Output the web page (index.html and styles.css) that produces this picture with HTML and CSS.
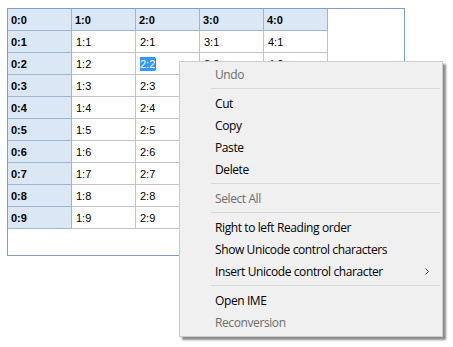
FILE: index.html
```html
<!DOCTYPE html>
<html lang="en">
<head>
    <meta charset="UTF-8">
    <title>Grid context menu</title>
    <link rel="stylesheet" href="styles.css">
</head>
<body>
<div class="grid-frame">
    <div class="grid">
        <div class="cell head">0:0</div>
        <div class="cell head">1:0</div>
        <div class="cell head">2:0</div>
        <div class="cell head">3:0</div>
        <div class="cell head">4:0</div>

        <div class="cell rowhead">0:1</div>
        <div class="cell">1:1</div>
        <div class="cell">2:1</div>
        <div class="cell">3:1</div>
        <div class="cell">4:1</div>

        <div class="cell rowhead">0:2</div>
        <div class="cell">1:2</div>
        <div class="cell editing"><span class="sel">2:2</span><span class="caret"></span></div>
        <div class="cell">3:2</div>
        <div class="cell">4:2</div>

        <div class="cell rowhead">0:3</div>
        <div class="cell">1:3</div>
        <div class="cell">2:3</div>
        <div class="cell">3:3</div>
        <div class="cell">4:3</div>

        <div class="cell rowhead">0:4</div>
        <div class="cell">1:4</div>
        <div class="cell">2:4</div>
        <div class="cell">3:4</div>
        <div class="cell">4:4</div>

        <div class="cell rowhead">0:5</div>
        <div class="cell">1:5</div>
        <div class="cell">2:5</div>
        <div class="cell">3:5</div>
        <div class="cell">4:5</div>

        <div class="cell rowhead">0:6</div>
        <div class="cell">1:6</div>
        <div class="cell">2:6</div>
        <div class="cell">3:6</div>
        <div class="cell">4:6</div>

        <div class="cell rowhead">0:7</div>
        <div class="cell">1:7</div>
        <div class="cell">2:7</div>
        <div class="cell">3:7</div>
        <div class="cell">4:7</div>

        <div class="cell rowhead">0:8</div>
        <div class="cell">1:8</div>
        <div class="cell">2:8</div>
        <div class="cell">3:8</div>
        <div class="cell">4:8</div>

        <div class="cell rowhead">0:9</div>
        <div class="cell">1:9</div>
        <div class="cell">2:9</div>
        <div class="cell">3:9</div>
        <div class="cell">4:9</div>
    </div>
</div>

<div class="menu">
    <div class="item disabled">Undo</div>
    <div class="sep"></div>
    <div class="item">Cut</div>
    <div class="item">Copy</div>
    <div class="item">Paste</div>
    <div class="item">Delete</div>
    <div class="sep"></div>
    <div class="item disabled">Select All</div>
    <div class="sep"></div>
    <div class="item">Right to left Reading order</div>
    <div class="item">Show Unicode control characters</div>
    <div class="item submenu">
        Insert Unicode control character
        <svg class="arrow" width="4" height="7" viewBox="0 0 4 7">
            <path d="M0.5 0.5 L3.5 3.5 L0.5 6.5" fill="none" stroke="#333" stroke-width="1"/>
        </svg>
    </div>
    <div class="sep"></div>
    <div class="item">Open IME</div>
    <div class="item disabled">Reconversion</div>
</div>
</body>
</html>
```

FILE: styles.css
```css
* {
    margin: 0;
    padding: 0;
    box-sizing: border-box;
}

body {
    background: #fff;
    padding: 8px 0 0 7px;
    font-family: "Liberation Sans", Arial, sans-serif;
    color: #000;
}

.grid-frame {
    width: 398px;
    height: 248px;
    border: 1px solid #7d9fc3;
    background: #fff;
}

.grid {
    display: grid;
    grid-template-columns: repeat(5, 64px);
    grid-auto-rows: 22px;
}

.cell {
    display: flex;
    align-items: center;
    padding-left: 4px;
    font-size: 11px;
    border-right: 1px solid #c3c3c3;
    border-bottom: 1px solid #c3c3c3;
}

.head,
.rowhead {
    background: #dbe7f4;
    font-weight: bold;
    padding-left: 3px;
    border-color: #9fb6cf;
}

.editing .sel {
    background: #3399ff;
    color: #fff;
    padding: 1px 0;
}

.caret {
    display: inline-block;
    width: 1px;
    height: 12px;
    background: #c0641a;
}

.menu {
    position: absolute;
    left: 179px;
    top: 61px;
    width: 264px;
    height: 276px;
    background: #f0f0f0;
    border: 1px solid #cccccc;
    box-shadow: 3px 3px 2px rgba(0, 0, 0, 0.45);
    padding: 1px 2px 3px 1px;
    font-family: "Open Sans", "Noto Sans", sans-serif;
    font-size: 12px;
    letter-spacing: -0.4px;
}

.item {
    height: 22px;
    display: flex;
    align-items: center;
    padding-left: 34px;
    color: #000;
}

.item.disabled {
    color: #6d6d6d;
}

.submenu {
    justify-content: space-between;
    padding-right: 11px;
}

.sep {
    height: 7px;
    margin-left: 30px;
    display: flex;
    align-items: center;
}

.sep::after {
    content: "";
    flex: 1;
    height: 1px;
    background: #d7d7d7;
}
```
